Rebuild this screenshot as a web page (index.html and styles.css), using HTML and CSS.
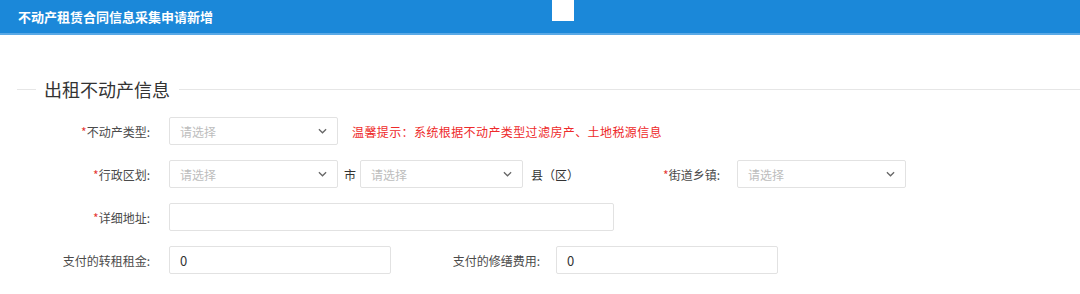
FILE: index.html
```html
<!DOCTYPE html>
<html lang="zh-CN">
<head>
<meta charset="utf-8">
<title>不动产租赁合同信息采集申请新增</title>
<link rel="stylesheet" href="styles.css">
</head>
<body>
<header class="topbar">
  <span class="topbar-title">不动产租赁合同信息采集申请新增</span>
  <span class="topbar-mark"></span>
</header>
<main class="content">
  <div class="legend">
    <span class="legend-line legend-line-left"></span>
    <span class="legend-text">出租不动产信息</span>
    <span class="legend-line legend-line-right"></span>
  </div>
  <div class="form">
    <div class="row">
      <label class="label"><span class="req">*</span>不动产类型:</label>
      <div class="select w169"><span class="placeholder">请选择</span><svg class="chev" viewBox="0 0 10 6" width="9" height="6"><path d="M1 1l4 4 4-4" fill="none" stroke="#666" stroke-width="1.4"/></svg></div>
      <span class="hint">温馨提示：系统根据不动产类型过滤房产、土地税源信息</span>
    </div>
    <div class="row">
      <label class="label"><span class="req">*</span>行政区划:</label>
      <div class="select w169"><span class="placeholder">请选择</span><svg class="chev" viewBox="0 0 10 6" width="9" height="6"><path d="M1 1l4 4 4-4" fill="none" stroke="#666" stroke-width="1.4"/></svg></div>
      <span class="unit unit-city">市</span>
      <div class="select w163"><span class="placeholder">请选择</span><svg class="chev" viewBox="0 0 10 6" width="9" height="6"><path d="M1 1l4 4 4-4" fill="none" stroke="#666" stroke-width="1.4"/></svg></div>
      <span class="unit unit-county">县（区）</span>
      <label class="label label-street"><span class="req">*</span>街道乡镇:</label>
      <div class="select w169"><span class="placeholder">请选择</span><svg class="chev" viewBox="0 0 10 6" width="9" height="6"><path d="M1 1l4 4 4-4" fill="none" stroke="#666" stroke-width="1.4"/></svg></div>
    </div>
    <div class="row">
      <label class="label"><span class="req">*</span>详细地址:</label>
      <div class="input w445"></div>
    </div>
    <div class="row">
      <label class="label">支付的转租租金:</label>
      <div class="input w222"><span class="value">0</span></div>
      <label class="label label-second">支付的修缮费用:</label>
      <div class="input w222"><span class="value">0</span></div>
    </div>
  </div>
</main>
</body>
</html>
```
FILE: styles.css
```css
* { box-sizing: border-box; }
html, body { margin: 0; padding: 0; background: #fff; }
body {
  font-family: "Noto Sans CJK SC", "Microsoft YaHei", "Liberation Sans", sans-serif;
  color: #333;
  width: 1080px;
  height: 294px;
  overflow: hidden;
}
.topbar {
  position: relative;
  height: 35px;
  background: #1b88d9;
  border-bottom: 2px solid #5aa9e6;
  display: flex;
  align-items: center;
  padding-left: 18px;
}
.topbar-title {
  color: #fff;
  font-size: 13px;
  font-weight: bold;
  line-height: 16px;
}
.topbar-mark {
  position: absolute;
  left: 552px;
  top: 0;
  width: 22px;
  height: 21px;
  background: #fff;
}
.content { padding-top: 42px; }
.legend {
  display: flex;
  align-items: center;
  height: 24px;
}
.legend-line { height: 1px; background: #e6e6e6; }
.legend-line-left { width: 19px; margin-left: 17px; }
.legend-line-right { flex: 1; margin-left: 9px; }
.legend-text {
  font-size: 18px;
  line-height: 24px;
  margin-left: 8px;
  color: #333;
}
.form {
  margin-top: 16px;
  display: flex;
  flex-direction: column;
  gap: 15px;
}
.row {
  display: flex;
  align-items: center;
  height: 28px;
}
.label {
  width: 150px;
  text-align: right;
  font-size: 12px;
  color: #4a4a4a;
  margin-right: 19px;
  flex: none;
}
.label-street { width: 140px; margin-right: 17px; }
.label-second { width: 149px; margin-right: 16px; }
.req { color: #e53935; }
.select, .input {
  height: 28px;
  border: 1px solid #e2e2e2;
  border-radius: 2px;
  background: #fff;
  display: flex;
  align-items: center;
  padding: 0 10px;
  flex: none;
  font-size: 12px;
}
.select { justify-content: space-between; padding-right: 10px; }
.placeholder { color: #bdbdbd; }
.value { color: #333; font-size: 13px; }
.chev { display: block; }
.w169 { width: 169px; }
.w163 { width: 163px; }
.w222 { width: 222px; }
.w445 { width: 445px; }
.hint {
  color: #ee2a2a;
  font-size: 12px;
  margin-left: 14px;
  letter-spacing: 0.4px;
}
.unit { font-size: 12px; color: #333; }
.unit-city { margin: 0 4px 0 6px; }
.unit-county { margin-left: 8px; width: 49px; }
```
